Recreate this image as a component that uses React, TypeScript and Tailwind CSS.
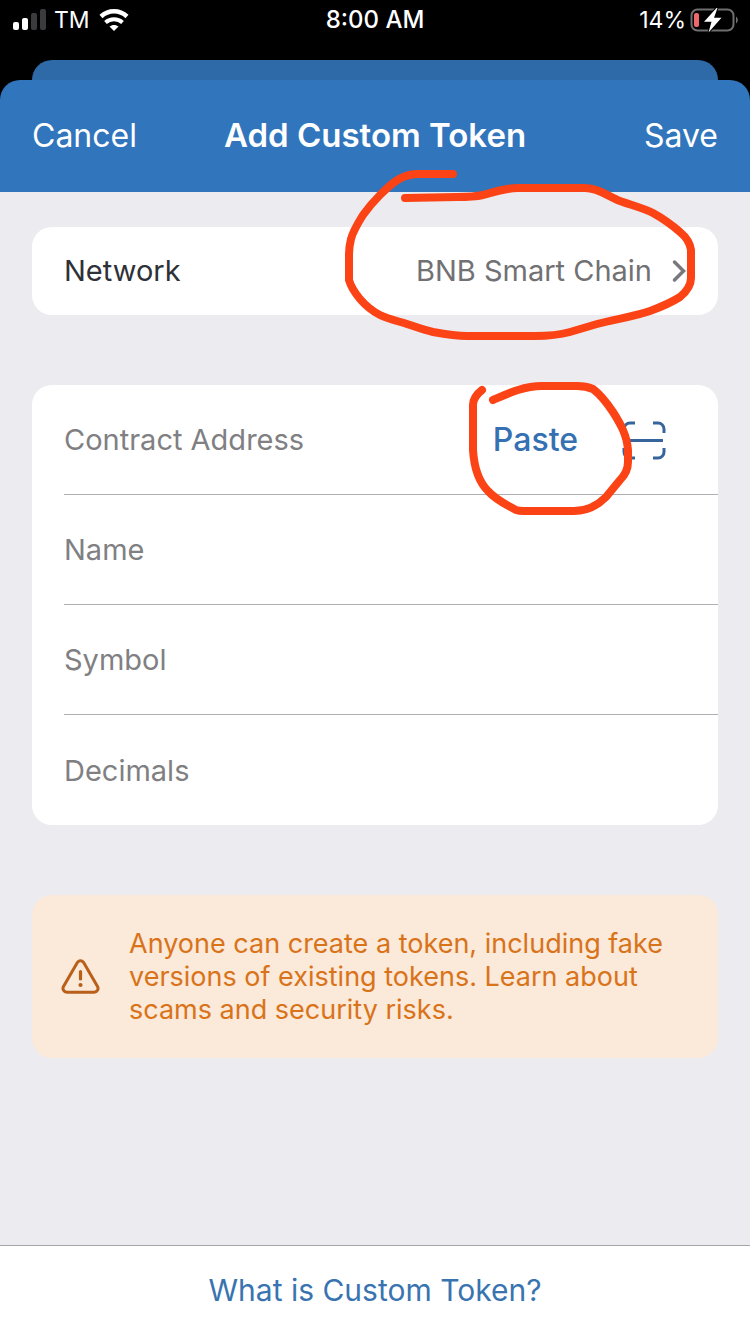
import React, { useState } from "react";

const fields = ["Contract Address", "Name", "Symbol", "Decimals"];

function StatusBar() {
  return (
    <div className="grid h-10 grid-cols-3 items-center px-3 text-[23px] text-white">
      <div className="flex items-center gap-2">
        <svg width="34" height="22" viewBox="0 0 34 22" aria-hidden="true">
          <rect x="1" y="13" width="6" height="8" rx="2" fill="#fff" />
          <rect x="10" y="9" width="6" height="12" rx="2" fill="#fff" />
          <rect x="19" y="4" width="6" height="17" rx="2" fill="#3b3b3d" />
          <rect x="28" y="0" width="6" height="21" rx="2" fill="#3b3b3d" />
        </svg>
        <span>TM</span>
        <svg width="32" height="24" viewBox="0 0 32 24" fill="none" aria-hidden="true">
          <path d="M3 8.500C10.500 1.500 21.500 1.500 29 8.500" stroke="#fff" strokeWidth="4.500" />
          <path d="M7.500 14.500c4.800-4.200 12.200-4.200 17 0" stroke="#fff" strokeWidth="4" />
          <path d="M11.500 18.600c2.600-2.200 6.400-2.200 9 0L16 23z" fill="#fff" />
        </svg>
      </div>
      <div className="text-center text-[24px] font-medium">8:00 AM</div>
      <div className="flex items-center justify-end gap-1">
        <span>14%</span>
        <svg width="48" height="26" viewBox="0 0 48 26" fill="none" aria-hidden="true">
          <rect x="1.500" y="2.500" width="42" height="21" rx="6" stroke="#6e6e70" strokeWidth="2" />
          <path d="M46 9.500c2.400 1.500 2.400 5.500 0 7z" fill="#6e6e70" />
          <rect x="4" y="6" width="5" height="14" rx="2" fill="#f0686b" />
          <path
            d="M26.500 1L14 14.800h7.500L18.500 25.500 31.500 10.800H24L27.500 1z"
            fill="#fff"
            stroke="#000"
            strokeWidth="2"
            paintOrder="stroke"
          />
        </svg>
      </div>
    </div>
  );
}

function Header() {
  return (
    <header className="flex h-28 items-center justify-between rounded-t-[20px] bg-[#3175bc] px-8 text-[32px] text-white">
      <button type="button" className="flex-1 text-left">Cancel</button>
      <h1 className="text-[33px] font-semibold">Add Custom Token</h1>
      <button type="button" className="flex-1 text-right">Save</button>
    </header>
  );
}

function NetworkMark() {
  return (
    <svg
      className="pointer-events-none absolute -top-[67px] right-[8px]"
      width="370"
      height="190"
      viewBox="340 160 370 190"
      fill="none"
      stroke="#fb4315"
      strokeWidth="8"
      strokeLinecap="round"
      strokeLinejoin="round"
      aria-hidden="true"
    >
      <path d="M453 174H416C400 175 390 185 380 195C374 201 368 208 363 215C358 223 353 231 351 239Q349 247 349 254V280C351 287 355 293 360 299C366 306 372 311 380 315C388 319 398 321 407 324C416 327 424 330 433 332C444 334 455 336 467 336H535C549 336 559 335 570 332L597 324C615 319 633 317 650 311C661 307 672 302 680 297C686 292 691 285 691 278V250C690 242 686 237 680 232C672 225 662 218 653 213C643 208 631 205 620 201C609 197 599 188 585 188H518C505 188 494 192 483 195C474 197 466 197 457 197L405 198" />
    </svg>
  );
}

function PasteMark() {
  return (
    <svg
      className="pointer-events-none absolute -top-[5px] right-[78px]"
      width="180"
      height="140"
      viewBox="460 380 180 140"
      fill="none"
      stroke="#fb4315"
      strokeWidth="8"
      strokeLinecap="round"
      strokeLinejoin="round"
      aria-hidden="true"
    >
      <path d="M482 390Q473 397 473 405V450C474 466 479 482 488 491C496 500 507 505 516 510Q519 511 524 511H574C588 511 598 505 606 497L620 480Q628 472 628 462V450C627 435 620 423 613 412C607 403 601 395 593 389Q586 386 577 386H542C524 386 509 393 493 400" />
    </svg>
  );
}

export default function App() {
  const [values, setValues] = useState<Record<string, string>>({});

  return (
    <div className="flex min-h-screen flex-col bg-black font-[Inter,sans-serif]">
      <StatusBar />
      <div className="mx-8 mt-5 h-5 rounded-t-[20px] bg-[#2e69a8]" />
      <Header />
      <main className="flex flex-1 flex-col gap-[70px] bg-[#ecebf0] px-8 pt-[35px] pb-8">
        <div className="relative">
          <button
            type="button"
            className="flex h-[88px] w-full items-center rounded-[20px] bg-white px-8 text-[29px]"
          >
            <span className="text-[#2f3138]">Network</span>
            <span className="ml-auto text-[#717174]">BNB Smart Chain</span>
            <svg className="ml-5" width="14" height="24" viewBox="0 0 14 24" fill="none" aria-hidden="true">
              <path d="M2.500 3L11.500 12 2.500 21" stroke="#77777c" strokeWidth="3.500" strokeLinecap="round" />
            </svg>
          </button>
          <NetworkMark />
        </div>

        <div className="relative">
          <form className="divide-y divide-[#b0b0b3] rounded-[20px] bg-white pl-8">
            {fields.map((field, i) => (
              <div key={field} className="flex h-[110px] items-center pr-[52px]">
                <input
                  type="text"
                  aria-label={field}
                  placeholder={field}
                  value={values[field] ?? ""}
                  onChange={(e) => setValues({ ...values, [field]: e.target.value })}
                  className="h-full min-w-0 flex-1 text-[29px] text-[#2f3138] outline-none placeholder:text-[#808083]"
                />
                {i === 0 && (
                  <>
                    <button type="button" className="text-[32px] font-medium text-[#3470b2]">
                      Paste
                    </button>
                    <button type="button" aria-label="Scan QR code" className="ml-11">
                      <svg width="44" height="40" viewBox="0 0 44 40" fill="none" stroke="#36659b" strokeWidth="3">
                        <path d="M2 13V9a6 6 0 0 1 6-6h5M31 3h5a6 6 0 0 1 6 6v4M42 28v4a6 6 0 0 1-6 6h-5M13 38H8a6 6 0 0 1-6-6v-4M2 20.500h39" />
                      </svg>
                    </button>
                  </>
                )}
              </div>
            ))}
          </form>
          <PasteMark />
        </div>

        <div className="flex items-center gap-7 rounded-[20px] bg-[#fbe9d9] py-8 pr-6 pl-[29px]">
          <svg className="shrink-0" width="40" height="38" viewBox="0 0 40 38" fill="none" aria-hidden="true">
            <path
              d="M16.500 4.300a3.800 3.800 0 0 1 6 0L36.500 28.500a3.800 3.800 0 0 1-3.300 5.700H5.800a3.800 3.800 0 0 1-3.300-5.700z"
              stroke="#b8601a"
              strokeWidth="3"
              strokeLinejoin="round"
            />
            <path d="M19.500 13.500v7.500" stroke="#b8601a" strokeWidth="3.200" strokeLinecap="round" />
            <circle cx="19.500" cy="27" r="2.100" fill="#b8601a" />
          </svg>
          <p className="text-[27px] leading-[33px] text-[#d9731a]">
            Anyone can create a token, including fake versions of existing tokens. Learn about scams and
            security risks.
          </p>
        </div>
      </main>
      <footer className="flex h-[89px] items-center justify-center border-t border-[#a4a4a8] bg-white">
        <a href="#" className="text-[30px] text-[#3974b1]">
          What is Custom Token?
        </a>
      </footer>
    </div>
  );
}
